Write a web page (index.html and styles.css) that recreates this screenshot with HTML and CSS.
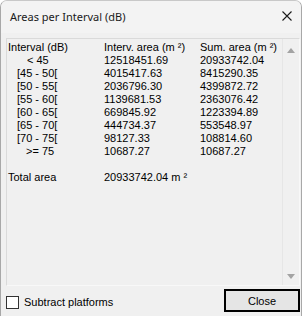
FILE: index.html
```html
<!DOCTYPE html>
<html lang="en">
<head>
  <meta charset="UTF-8">
  <title>Areas per Interval (dB)</title>
  <link rel="stylesheet" href="styles.css">
</head>
<body>
  <div class="dialog">
    <div class="dialog-title">
      <span class="title-text">Areas per Interval (dB)</span>
      <svg class="title-close" width="10" height="10" viewBox="0 0 10 10">
        <path d="M0.5 0.5 L9.5 9.5 M9.5 0.5 L0.5 9.5" stroke="#1a1a1a" stroke-width="1.1" fill="none"/>
      </svg>
    </div>
    <div class="dialog-body">
      <div class="list-box">
        <div class="list-lines">
          <div class="line"><span>Interval (dB)</span><span>Interv. area (m ²)</span><span>Sum. area (m ²)</span></div>
          <div class="line"><span class="ind-2">&lt; 45</span><span>12518451.69</span><span>20933742.04</span></div>
          <div class="line"><span class="ind-1">[45 - 50[</span><span>4015417.63</span><span>8415290.35</span></div>
          <div class="line"><span class="ind-1">[50 - 55[</span><span>2036796.30</span><span>4399872.72</span></div>
          <div class="line"><span class="ind-1">[55 - 60[</span><span>1139681.53</span><span>2363076.42</span></div>
          <div class="line"><span class="ind-1">[60 - 65[</span><span>669845.92</span><span>1223394.89</span></div>
          <div class="line"><span class="ind-1">[65 - 70[</span><span>444734.37</span><span>553548.97</span></div>
          <div class="line"><span class="ind-1">[70 - 75[</span><span>98127.33</span><span>108814.60</span></div>
          <div class="line"><span class="ind-3">&gt;= 75</span><span>10687.27</span><span>10687.27</span></div>
          <div class="line"></div>
          <div class="line"><span>Total area</span><span class="wide">20933742.04 m ²</span></div>
        </div>
        <div class="scroll-bar">
          <span class="arrow-up"></span>
          <span class="arrow-down"></span>
        </div>
      </div>
      <div class="dialog-foot">
        <label class="check">
          <span class="check-box"></span>
          <span>Subtract platforms</span>
        </label>
        <button class="btn-close">Close</button>
      </div>
    </div>
  </div>
</body>
</html>
```

FILE: styles.css
```css
body {
  margin: 0;
  background-color: #ffffff;
  font-family: "Liberation Sans", Arial, sans-serif;
  font-size: 11px;
  color: #000;
}

.dialog {
  width: 302px;
  height: 316px;
  display: flex;
  flex-direction: column;
  background-color: #f0f0f0;
  border-left: 1px solid #a8a8a8;
  border-right: 1px solid #a8a8a8;
  border-top: 1px solid #c8c8c8;
  border-radius: 7px 7px 0 0;
  box-sizing: border-box;
  overflow: hidden;
}

.dialog-title {
  height: 30px;
  flex: none;
  display: flex;
  align-items: center;
  justify-content: space-between;
  padding: 0 9px 2px 9px;
  background-color: #f3f3f3;
}

.title-text {
  font-family: "Noto Sans", sans-serif;
  font-size: 11px;
  color: #1a1a1a;
}

.title-close {
  margin-top: -1px;
}

.dialog-body {
  flex: 1;
  display: flex;
  flex-direction: column;
  padding: 5px 1px 0 5px;
}

.list-box {
  height: 248px;
  display: flex;
  border: 1px solid #dadada;
  border-right-color: #f8f8f8;
  border-bottom-color: #f8f8f8;
  box-sizing: border-box;
}

.list-lines {
  flex: 1;
  padding: 2px 0 0 1px;
}

.line {
  display: grid;
  grid-template-columns: 96px 96px 80px;
  height: 13px;
  line-height: 13px;
  white-space: nowrap;
}

.ind-1 {
  padding-left: 9px;
}

.ind-2 {
  padding-left: 19px;
}

.ind-3 {
  padding-left: 18px;
}

.wide {
  grid-column: span 2;
}

.scroll-bar {
  width: 17px;
  flex: none;
  display: flex;
  flex-direction: column;
  justify-content: space-between;
  align-items: center;
  padding: 9px 0 6px 0;
  border-left: 1px solid #e6e6e6;
  box-sizing: border-box;
}

.arrow-up {
  width: 0;
  height: 0;
  border-left: 4px solid transparent;
  border-right: 4px solid transparent;
  border-bottom: 5px solid #a3a3a3;
}

.arrow-down {
  width: 0;
  height: 0;
  border-left: 4px solid transparent;
  border-right: 4px solid transparent;
  border-top: 5px solid #a3a3a3;
}

.dialog-foot {
  flex: 1;
  display: flex;
  align-items: center;
  justify-content: space-between;
  padding-bottom: 2px;
}

.check {
  display: flex;
  align-items: center;
  gap: 5px;
  margin-top: 4px;
}

.check-box {
  width: 11px;
  height: 11px;
  border: 1px solid #333;
  background-color: #fff;
}

.btn-close {
  width: 76px;
  height: 23px;
  margin-top: 1px;
  border: 2px solid #000;
  background-color: #e5e5e5;
  font-family: "Liberation Sans", Arial, sans-serif;
  font-size: 11px;
  color: #000;
  padding: 0;
}
```
